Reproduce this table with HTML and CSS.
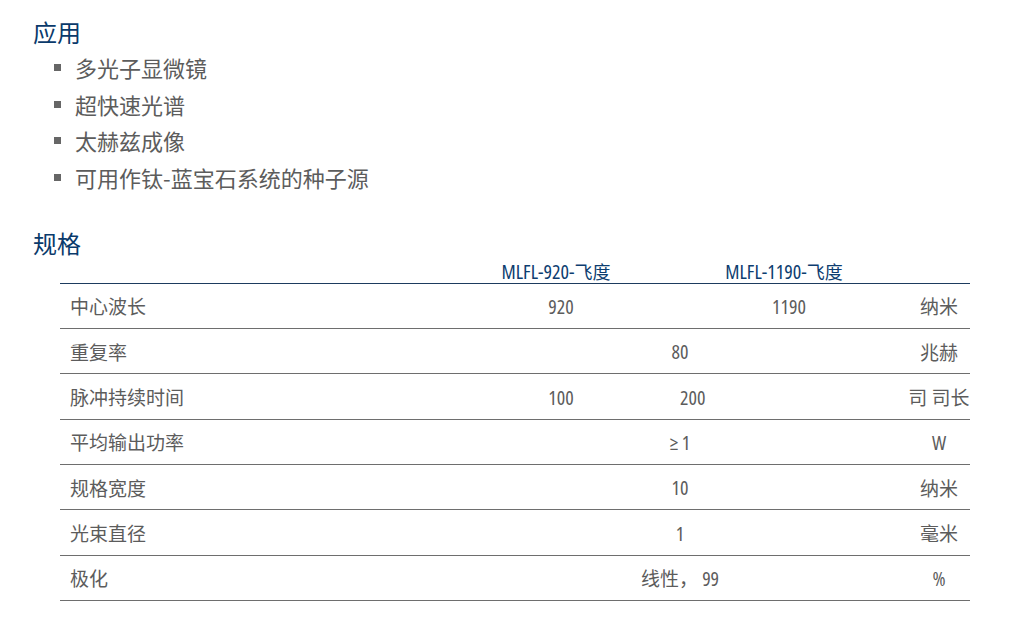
FILE: index.html
```html
<!DOCTYPE html>
<html lang="zh-CN">
<head>
<meta charset="utf-8">
<title>应用与规格</title>
<link rel="stylesheet" href="styles.css">
</head>
<body>
<div class="page">
  <h2 class="section-title">应用</h2>
  <ul class="apps">
    <li>多光子显微镜</li>
    <li>超快速光谱</li>
    <li>太赫兹成像</li>
    <li>可用作钛-蓝宝石系统的种子源</li>
  </ul>

  <h2 class="section-title spec-title">规格</h2>
  <div class="spec">
    <div class="row head">
      <div class="cell"></div>
      <div class="cell c"><span class="n">MLFL-920-</span>飞度</div>
      <div class="cell c"><span class="n">MLFL-1190-</span>飞度</div>
      <div class="cell"></div>
    </div>
    <div class="row">
      <div class="cell label">中心波长</div>
      <div class="cell c"><span class="n">920</span></div>
      <div class="cell c"><span class="n">1190</span></div>
      <div class="cell c">纳米</div>
    </div>
    <div class="row">
      <div class="cell label">重复率</div>
      <div class="cell c span2"><span class="n">80</span></div>
      <div class="cell c">兆赫</div>
    </div>
    <div class="row">
      <div class="cell label">脉冲持续时间</div>
      <div class="cell c"><span class="n">100</span></div>
      <div class="cell l"><span class="n">200</span></div>
      <div class="cell c">司 司长</div>
    </div>
    <div class="row">
      <div class="cell label">平均输出功率</div>
      <div class="cell c span2"><span class="n">≥ 1</span></div>
      <div class="cell c"><span class="n">W</span></div>
    </div>
    <div class="row">
      <div class="cell label">规格宽度</div>
      <div class="cell c span2"><span class="n">10</span></div>
      <div class="cell c">纳米</div>
    </div>
    <div class="row">
      <div class="cell label">光束直径</div>
      <div class="cell c span2"><span class="n">1</span></div>
      <div class="cell c">毫米</div>
    </div>
    <div class="row">
      <div class="cell label">极化</div>
      <div class="cell c span2">线性，&nbsp;<span class="n">99</span></div>
      <div class="cell c"><span class="n">%</span></div>
    </div>
  </div>
</div>
</body>
</html>
```
FILE: styles.css
```css
html, body {
  margin: 0;
  padding: 0;
  background: #ffffff;
}

body {
  font-family: "Noto Sans CJK SC", sans-serif;
  color: #5c5c5c;
}

.page {
  padding: 17px 0 0 33px;
}

.section-title {
  margin: 0;
  font-weight: 400;
  font-size: 24px;
  line-height: 30px;
  color: #0a3a6b;
}

.spec-title {
  margin-top: 32px;
}

.apps {
  list-style: none;
  margin: 2px 0 0 0;
  padding: 0 0 0 21px;
  font-size: 22px;
  line-height: 36.7px;
}

.apps li {
  display: flex;
  align-items: center;
  gap: 14px;
}

.apps li::before {
  content: "";
  width: 7px;
  height: 7px;
  background: #666666;
  flex: none;
}

.spec {
  margin-left: 27px;
  width: 910px;
  font-size: 19px;
}

.row {
  display: grid;
  grid-template-columns: 392px 218px 238px 62px;
  height: 45.33px;
  box-sizing: border-box;
  border-bottom: 1px solid #6e6e6e;
  align-items: center;
}

.row.head {
  height: 26px;
  border-bottom: 1px solid #1d3b5e;
  font-size: 18px;
  color: #0d3d70;
}

.row.head .cell {
  padding-right: 10px;
}

.row.head .n {
  font-size: 20px;
}

.cell {
  white-space: nowrap;
}

.label {
  padding-left: 10px;
}

.c {
  text-align: center;
}

.l {
  padding-left: 10px;
}

.span2 {
  grid-column: span 2;
}

.n {
  font-family: "Open Sans", sans-serif;
  font-stretch: 75%;
  font-size: 1.05em;
}
```
